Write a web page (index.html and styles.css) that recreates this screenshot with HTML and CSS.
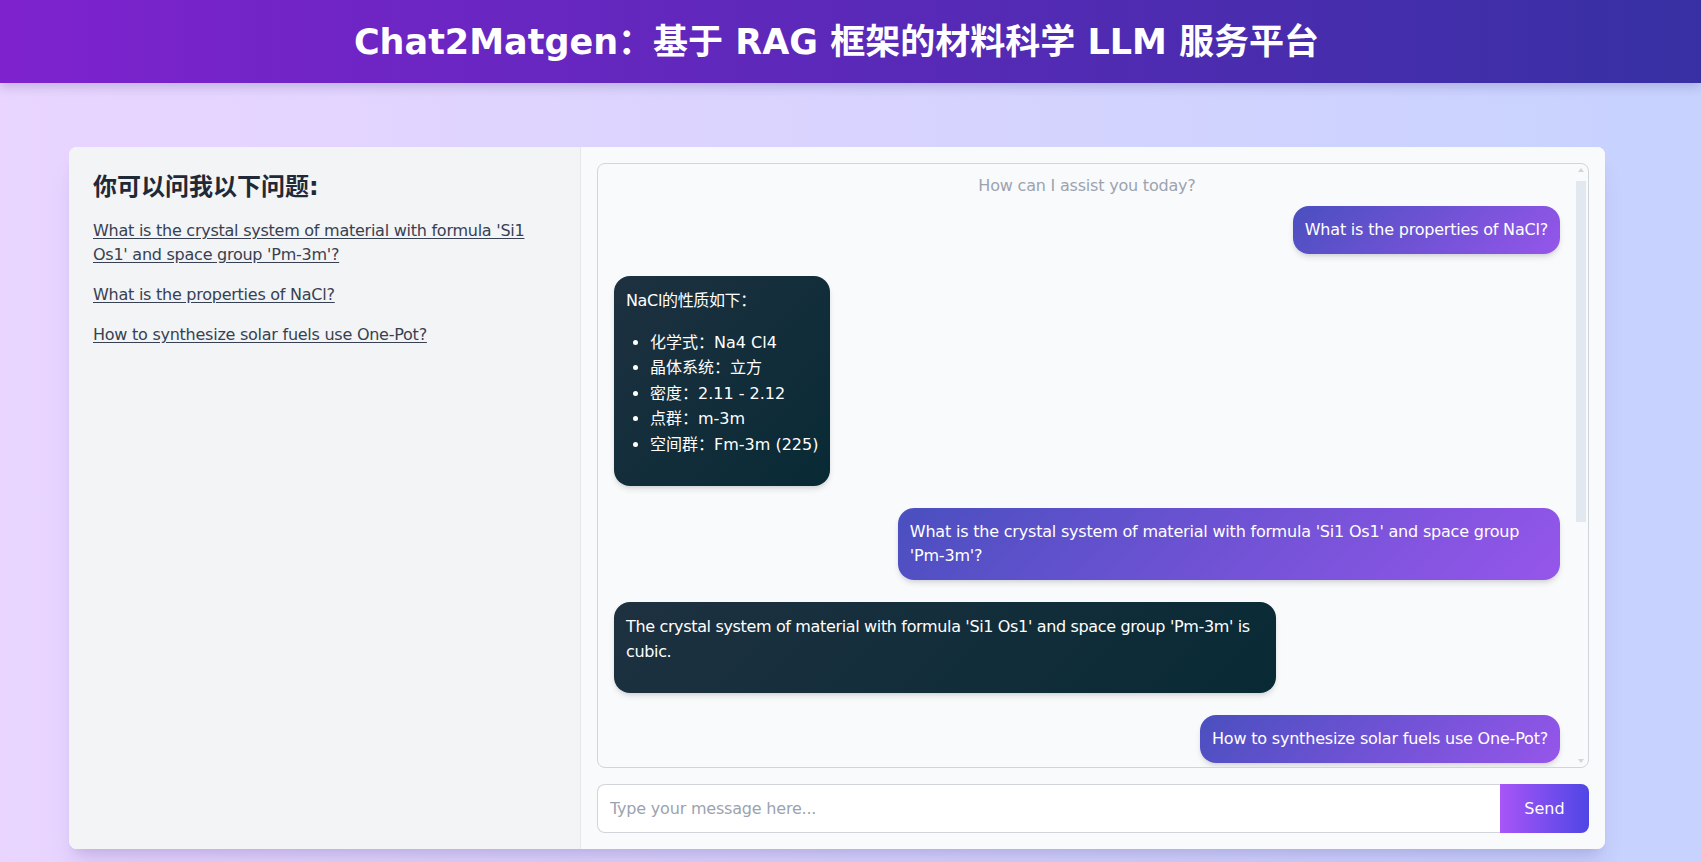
FILE: index.html
```html
<!DOCTYPE html>
<html lang="zh-CN">
<head>
<meta charset="utf-8">
<title>Chat2Matgen</title>
<link rel="stylesheet" href="styles.css">
</head>
<body>
<header class="topbar">
  <h1 class="title">Chat2Matgen：基于 RAG 框架的材料科学 LLM 服务平台</h1>
</header>
<main class="card">
  <aside class="side">
    <h2 class="side-title">你可以问我以下问题:</h2>
    <ul class="suggestions">
      <li><a href="#" class="suggestion">What is the crystal system of material with formula 'Si1 Os1' and space group 'Pm-3m'?</a></li>
      <li><a href="#" class="suggestion">What is the properties of NaCl?</a></li>
      <li><a href="#" class="suggestion">How to synthesize solar fuels use One-Pot?</a></li>
    </ul>
  </aside>
  <section class="chat-panel">
    <div class="chat">
      <div class="chat-scroll">
        <p class="welcome">How can I assist you today?</p>
        <div class="thread">
          <div class="row row-user"><div class="bubble bubble-user">What is the properties of NaCl?</div></div>
          <div class="row row-bot"><div class="bubble bubble-bot">
            <p>NaCl的性质如下：</p>
            <ul>
              <li>化学式：Na4 Cl4</li>
              <li>晶体系统：立方</li>
              <li>密度：2.11 - 2.12</li>
              <li>点群：m-3m</li>
              <li>空间群：Fm-3m (225)</li>
            </ul>
          </div></div>
          <div class="row row-user"><div class="bubble bubble-user">What is the crystal system of material with formula 'Si1 Os1' and space group 'Pm-3m'?</div></div>
          <div class="row row-bot"><div class="bubble bubble-bot">
            <p>The crystal system of material with formula 'Si1 Os1' and space group 'Pm-3m' is cubic.</p>
          </div></div>
          <div class="row row-user"><div class="bubble bubble-user">How to synthesize solar fuels use One-Pot?</div></div>
        </div>
      </div>
      <div class="scrollbar" aria-hidden="true">
        <div class="sb-btn"><span class="sb-arrow sb-arrow-up"></span></div>
        <div class="sb-track"><div class="sb-thumb"></div></div>
        <div class="sb-btn"><span class="sb-arrow sb-arrow-down"></span></div>
      </div>
    </div>
    <form class="composer" onsubmit="return false">
      <input class="composer-input" type="text" placeholder="Type your message here...">
      <button class="composer-send" type="submit">Send</button>
    </form>
  </section>
</main>
</body>
</html>
```
FILE: styles.css
```css
* { box-sizing: border-box; }

html, body { height: 100%; }

body {
  margin: 0;
  overflow: hidden;
  font-family: "DejaVu Sans", "Noto Sans CJK SC", sans-serif;
  font-size: 16px;
  color: #1f2937;
  background: linear-gradient(to right, #e9d5ff, #c7d2fe);
}

.topbar {
  height: 83px;
  display: flex;
  align-items: center;
  justify-content: center;
  padding-right: 28px;
  background: linear-gradient(to right, #7e22ce, #3730a3);
  box-shadow: 0 4px 10px rgba(40, 20, 90, 0.18);
}

.title {
  margin: 0;
  color: #ffffff;
  font-size: 35px;
  line-height: 40px;
  font-weight: 700;
}

.card {
  width: 1536px;
  height: 702px;
  margin: 64px 0 0 69px;
  display: flex;
  border-radius: 8px;
  overflow: hidden;
  background: #f9fafb;
  box-shadow: 0 20px 25px -5px rgba(60, 40, 120, 0.12), 0 8px 10px -6px rgba(60, 40, 120, 0.12);
}

.side {
  width: 512px;
  flex: none;
  padding: 24px;
  background: #f3f4f6;
  border-right: 1px solid #e5e7eb;
}

.side-title {
  margin: 0 0 16px;
  font-size: 24px;
  line-height: 32px;
  font-weight: 700;
  color: #1f2937;
}

.suggestions {
  list-style: none;
  margin: 0;
  padding: 0;
  display: flex;
  flex-direction: column;
  gap: 16px;
}

.suggestion {
  color: #374151;
  line-height: 24px;
  letter-spacing: -0.25px;
  text-decoration: underline;
  text-underline-offset: 2px;
}

.chat-panel {
  flex: 1;
  display: flex;
  flex-direction: column;
  gap: 16px;
  padding: 16px;
  background: #f9fafb;
}

.chat {
  flex: 1;
  min-height: 0;
  display: flex;
  background: #f9fafb;
  border: 1px solid #d1d5db;
  border-radius: 8px;
  overflow: hidden;
}

.chat-scroll {
  flex: 1;
  min-width: 0;
  overflow: hidden;
  padding: 10px 16px 16px;
}

.scrollbar {
  width: 12px;
  flex: none;
  display: flex;
  flex-direction: column;
}

.sb-btn {
  height: 12px;
  flex: none;
  display: flex;
  align-items: center;
  justify-content: center;
  padding-right: 2px;
}

.sb-arrow {
  width: 0;
  height: 0;
  border-left: 3.5px solid transparent;
  border-right: 3.5px solid transparent;
}

.sb-arrow-up { border-bottom: 4px solid #cfd6e1; }
.sb-arrow-down { border-top: 4px solid #cfd6e1; }

.sb-track {
  flex: 1;
  padding: 5px 2px 0 0;
}

.sb-thumb {
  height: 341px;
  background: #e2e8f0;
}

.welcome {
  margin: 0 0 8px;
  text-align: center;
  color: #9ca3af;
  line-height: 24px;
  letter-spacing: -0.2px;
}

.thread {
  display: flex;
  flex-direction: column;
  gap: 22px;
}

.row { display: flex; }
.row-user { justify-content: flex-end; }
.row-bot { justify-content: flex-start; }

.bubble {
  max-width: 70%;
  padding: 12px;
  border-radius: 16px;
  color: #ffffff;
  box-shadow: 0 4px 6px -1px rgba(0, 0, 0, 0.12), 0 2px 4px -2px rgba(0, 0, 0, 0.1);
}

.bubble-user {
  line-height: 24px;
  letter-spacing: -0.2px;
  background: linear-gradient(135deg, #4a4fbf, #9556ea);
}

.bubble-bot {
  line-height: 25.6px;
  letter-spacing: -0.35px;
  background: linear-gradient(135deg, #1e3140, #082a35);
}

.bubble-bot p { margin: 0 0 16px; }
.bubble-bot ul {
  margin: 0 0 16px;
  padding-left: 24px;
  list-style: disc;
  letter-spacing: 0;
}

.composer {
  flex: none;
  display: flex;
  height: 49px;
  margin: 0;
}

.composer-input {
  flex: 1;
  min-width: 0;
  height: 49px;
  padding: 0 12px;
  font: inherit;
  letter-spacing: -0.2px;
  color: #1f2937;
  background: #ffffff;
  border: 1px solid #d1d5db;
  border-right: none;
  border-radius: 8px 0 0 8px;
  outline: none;
}

.composer-input::placeholder { color: #9ca3af; }

.composer-send {
  width: 89px;
  flex: none;
  height: 49px;
  font: inherit;
  color: #ffffff;
  border: none;
  border-radius: 0 8px 8px 0;
  background: linear-gradient(to right, #a855f7, #4f46e5);
  cursor: pointer;
}
```
